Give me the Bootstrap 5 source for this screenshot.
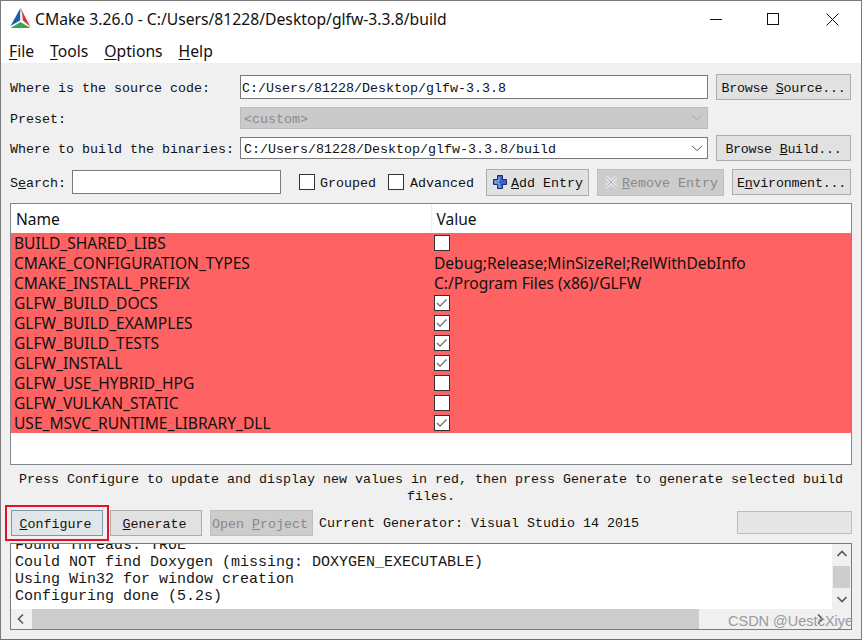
<!DOCTYPE html>
<html lang="en">
<head>
<meta charset="utf-8">
<title>CMake</title>
<link rel="stylesheet" href="https://cdn.jsdelivr.net/npm/bootstrap@5.3.0/dist/css/bootstrap.min.css">
<style>
html,body{height:100%;margin:0}
body{background:#f0f0f0;overflow:hidden}
.win{height:640px;border:1px solid #7a7a7a;border-bottom-color:#6f6f6f;background:#f0f0f0;display:flex;flex-direction:column;font-family:"Liberation Mono",monospace;font-size:13.33px;color:#111;overflow:hidden}
.head{background:#fff;height:62px;flex:none}
.titlebar{height:38px;padding-bottom:2px;font-family:"Noto Sans",sans-serif;font-size:15.7px;color:#111}
.title-txt{padding-top:2px}
.logo{margin-left:9px;margin-right:4px;margin-top:-1px}
.winbtn{height:36px;display:flex;align-items:center;justify-content:center}
.wb-min{width:55px}
.wb-max{width:60px}
.wb-close{width:58px}
.menubar{height:24px;padding-left:8px;gap:16px;font-family:"Noto Sans",sans-serif;font-size:15.7px;line-height:24px;color:#111}
.menubar u{text-underline-offset:2px}
.panel{padding:11px 0 0 9px;width:851px}
.gridtop{display:grid;grid-template-columns:230px 468px 135px;column-gap:0;row-gap:7px;grid-template-rows:26px 21px 26px;align-items:center}
.gridtop .sb{margin-left:8px;width:135px;letter-spacing:-.25px}
.gridtop label,.row4 label{padding-top:4px}
.wf{border-radius:0;border:1px solid #7a7a7a;padding:2px 2px 0 1px;height:24px;font:inherit;color:#111;background-color:#fff;box-shadow:none}
.wf.form-select{height:22px;padding:2px 2px 0 3px;background-image:url("data:image/svg+xml,%3Csvg xmlns='http://www.w3.org/2000/svg' width='12' height='7'%3E%3Cpath d='M1 1l5 4.5L11 1' fill='none' stroke='%23606060'/%3E%3C/svg%3E");background-position:right 4px center;background-size:12px 7px}
.wf.form-select:disabled{background-color:#cacaca;border-color:#bdbdbd;color:#8c8c8c;background-image:url("data:image/svg+xml,%3Csvg xmlns='http://www.w3.org/2000/svg' width='12' height='7'%3E%3Cpath d='M1 1l5 4.5L11 1' fill='none' stroke='%23aaaaaa'/%3E%3C/svg%3E")}
.wbtn{border-radius:0;border:1px solid #adadad;background:#e1e1e1;color:#111;font:inherit;padding:4px 0 0;height:26px;white-space:nowrap;display:inline-flex;align-items:center;justify-content:center}
.wbtn.off,.wbtn:disabled{background:#cccccc;border-color:#bfbfbf;color:#888;opacity:1}
.row4{display:flex;align-items:center;height:28px;margin-top:7px}
.searchbox{width:209px;margin-left:6px}
.form-check-input.wchk[type=checkbox]{width:16px;height:16px;margin-top:0;margin-bottom:0;border-radius:0;border:1px solid #333;background-color:#fff;flex:none;float:none}
.form-check-input.wchk[type=checkbox]:checked{background-color:#fff;border-color:#333;background-image:url("data:image/svg+xml,%3Csvg xmlns='http://www.w3.org/2000/svg' width='16' height='16'%3E%3Cpath d='M3 8l3 3.2L12.500 4.500' fill='none' stroke='%23666' stroke-width='1.200'/%3E%3C/svg%3E");background-size:16px 16px}
.gap-a{margin-left:18px}
.gap-b{margin-left:12px}
.gap-c{margin-left:5px}
.gap-d{margin-left:6px}
.ebtn-add{width:103px;margin-left:12px;height:27px}
.ebtn-rem{width:127px;margin-left:8px;height:27px}
.ebtn-env{width:119px;margin-left:8px;letter-spacing:-.2px}
.ico{margin-right:3px;margin-top:-4px}
.treebox{width:842px;height:262px;margin-top:7px;border:1px solid #828790;background:#fff;font-family:"Noto Sans",sans-serif;font-size:15.55px;color:#111;overflow:hidden}
.treebox table{margin:0;width:100%;table-layout:fixed;--bs-table-bg:transparent;--bs-table-color:#111;border:0}
.treebox col.c1{width:420px}
.treebox th{height:29px;padding:2px 0 0 5px;font-weight:400;border:0;vertical-align:middle;background:#fff}
.treebox th+th{border-left:1px solid #eee}
.treebox td{height:20px;padding:0 0 0 3px;border:0;background:#ff6262;line-height:20px;vertical-align:middle;white-space:nowrap;color:#111;box-shadow:none}
.treebox td+td{padding-left:3px}
.treebox td .wchk{display:block}
.note{margin-top:6px;height:33px;width:842px;text-align:center;line-height:17px}
.actions{display:flex;align-items:center;margin-top:6px;height:26px;width:842px}
.cfg{position:relative;width:92px;margin-left:1px;background:#e1e6e8;border-color:#7a97ab;padding-right:3px}
.cfg::after{content:"";position:absolute;left:-7px;right:-7px;top:-6px;bottom:-6px;border:2px solid #e81123;pointer-events:none}
.act-gen{width:92px;margin-left:7px;padding-right:3px}
.act-open{width:103px;margin-left:8px;padding-right:3px}
.gen-label{margin-left:6px;padding-top:1px}
.prog{width:115px;height:23px;margin-left:auto;border:1px solid #bcbcbc;background:#e6e6e6;margin-top:-2px}
.logbox{width:842px;height:87px;margin-top:7px;border:1px solid #7a7a7a;background:#fff;display:grid;grid-template-columns:1fr 19px;grid-template-rows:65px 20px;overflow:hidden;font-family:"Liberation Mono",monospace;font-size:15px;line-height:17px;color:#161616}
.logtxt{overflow:hidden;padding-left:4px}
.logtxt div:first-child{margin-top:-7px}
.vbar{background:#f0f0f0;display:flex;flex-direction:column;align-items:center;justify-content:space-between;padding:0 1px}
.vthumb{width:100%;height:22px;background:#cdcdcd}
.hbar{background:#f0f0f0;display:flex;align-items:center}
.hl{margin-left:4px;flex:none}
.hr{margin-left:auto;margin-right:6px}
.hthumb{height:100%;width:667px;background:#cdcdcd;margin-left:5px}
.corner{background:#f0f0f0}
.mark-wm{position:absolute;left:727px;top:611px;font-family:"Liberation Sans",sans-serif;font-size:14.5px;line-height:18px;color:#9a9a9a;white-space:nowrap}
</style>
</head>
<body>
<div class="win position-relative">
  <div class="head">
    <div class="titlebar d-flex align-items-center">
      <svg class="logo" width="21" height="21" viewBox="0 0 21 21"><polygon points="10.500,0 .5,18 10,12.500" fill="#1b5ca8"/><polygon points="10.500,2 10,13 13,13" fill="#e6e6e6"/><polygon points="10.500,0 20.500,19 13,12.500 12,5" fill="#d2333b"/><polygon points=".5,20 20.500,20 10.500,14" fill="#35a552"/></svg>
      <span class="flex-grow-1 title-txt">CMake 3.26.0 - C:/Users/81228/Desktop/glfw-3.3.8/build</span>
      <div class="winbtn wb-min"><svg width="12" height="12"><path d="M0 6.500h12" stroke="#111"/></svg></div>
      <div class="winbtn wb-max"><svg width="12" height="12"><rect x=".5" y=".5" width="11" height="11" fill="none" stroke="#111"/></svg></div>
      <div class="winbtn wb-close"><svg width="13" height="13"><path d="M.5.5l12 12M12.500.5l-12 12" stroke="#111"/></svg></div>
    </div>
    <nav class="nav menubar">
      <span><u>F</u>ile</span><span><u>T</u>ools</span><span><u>O</u>ptions</span><span><u>H</u>elp</span>
    </nav>
  </div>
  <div class="panel">
    <div class="gridtop">
      <label>Where is the source code:</label>
      <input class="form-control wf" value="C:/Users/81228/Desktop/glfw-3.3.8">
      <button class="btn wbtn sb">Browse&nbsp;<u>S</u>ource...</button>
      <label>Preset:</label>
      <select class="form-select wf" disabled><option>&lt;custom&gt;</option></select>
      <span></span>
      <label>Where to build the binaries:</label>
      <select class="form-select wf"><option>C:/Users/81228/Desktop/glfw-3.3.8/build</option></select>
      <button class="btn wbtn sb">Browse&nbsp;<u>B</u>uild...</button>
    </div>
    <div class="row4">
      <label>S<u>e</u>arch:</label>
      <input class="form-control wf searchbox">
      <input class="form-check-input wchk gap-a" type="checkbox">
      <label class="text-nowrap gap-c">Grouped</label>
      <input class="form-check-input wchk gap-b" type="checkbox">
      <label class="text-nowrap gap-d">Advanced</label>
      <button class="btn wbtn ebtn-add">
        <svg class="ico" width="16" height="16" viewBox="0 0 16 16"><path d="M5.500 1.500h5v4h4v5h-4v4h-5v-4h-4v-5h4z" fill="#3b62c4" stroke="#16306e"/><path d="M7 3v4H3v2h4v4h2" fill="none" stroke="#a9c0f0"/></svg><u>A</u>dd&nbsp;Entry
      </button>
      <button class="btn wbtn off ebtn-rem" disabled>
        <svg class="ico" width="16" height="16" viewBox="0 0 16 16"><path d="M3 3l10 10M13 3L3 13" stroke="#e4e4e4" stroke-width="4"/><path d="M3 3l10 10M13 3L3 13" stroke="#adadad" stroke-width="1"/></svg><u>R</u>emove&nbsp;Entry
      </button>
      <button class="btn wbtn ebtn-env">E<u>n</u>vironment...</button>
    </div>
    <div class="treebox">
      <table class="table">
        <colgroup><col class="c1"><col></colgroup>
        <thead><tr><th>Name</th><th>Value</th></tr></thead>
        <tbody>
          <tr><td>BUILD_SHARED_LIBS</td><td><input class="form-check-input wchk" type="checkbox"></td></tr>
          <tr><td>CMAKE_CONFIGURATION_TYPES</td><td>Debug;Release;MinSizeRel;RelWithDebInfo</td></tr>
          <tr><td>CMAKE_INSTALL_PREFIX</td><td>C:/Program Files (x86)/GLFW</td></tr>
          <tr><td>GLFW_BUILD_DOCS</td><td><input class="form-check-input wchk" type="checkbox" checked></td></tr>
          <tr><td>GLFW_BUILD_EXAMPLES</td><td><input class="form-check-input wchk" type="checkbox" checked></td></tr>
          <tr><td>GLFW_BUILD_TESTS</td><td><input class="form-check-input wchk" type="checkbox" checked></td></tr>
          <tr><td>GLFW_INSTALL</td><td><input class="form-check-input wchk" type="checkbox" checked></td></tr>
          <tr><td>GLFW_USE_HYBRID_HPG</td><td><input class="form-check-input wchk" type="checkbox"></td></tr>
          <tr><td>GLFW_VULKAN_STATIC</td><td><input class="form-check-input wchk" type="checkbox"></td></tr>
          <tr><td>USE_MSVC_RUNTIME_LIBRARY_DLL</td><td><input class="form-check-input wchk" type="checkbox" checked></td></tr>
        </tbody>
      </table>
    </div>
    <div class="note">Press Configure to update and display new values in red, then press Generate to generate selected build files.</div>
    <div class="actions">
      <button class="btn wbtn cfg"><u>C</u>onfigure</button>
      <button class="btn wbtn act-gen"><u>G</u>enerate</button>
      <button class="btn wbtn off act-open" disabled>Open&nbsp;<u>P</u>roject</button>
      <span class="gen-label">Current Generator: Visual Studio 14 2015</span>
      <div class="prog"></div>
    </div>
    <div class="logbox">
      <div class="logtxt">
        <div>Found Threads: TRUE</div>
        <div>Could NOT find Doxygen (missing: DOXYGEN_EXECUTABLE)</div>
        <div>Using Win32 for window creation</div>
        <div>Configuring done (5.2s)</div>
      </div>
      <div class="vbar">
        <svg class="mt-1" width="12" height="12"><path d="M1.500 8L6 3.500 10.500 8" fill="none" stroke="#555" stroke-width="1.600"/></svg>
        <div class="vthumb"></div>
        <svg class="mb-1" width="12" height="12"><path d="M1.500 4L6 8.500 10.500 4" fill="none" stroke="#555" stroke-width="1.600"/></svg>
      </div>
      <div class="hbar">
        <svg class="hl" width="12" height="12"><path d="M8 1.500L3.500 6 8 10.500" fill="none" stroke="#555" stroke-width="1.600"/></svg>
        <div class="hthumb"></div>
        <svg class="hr" width="12" height="12"><path d="M4 1.500L8.500 6 4 10.500" fill="none" stroke="#555" stroke-width="1.600"/></svg>
      </div>
      <div class="corner"></div>
    </div>
  </div>
  <div class="mark-wm">CSDN @UestcXiye</div>
</div>
<script src="https://cdn.jsdelivr.net/npm/bootstrap@5.3.0/dist/js/bootstrap.bundle.min.js"></script>
</body>
</html>
